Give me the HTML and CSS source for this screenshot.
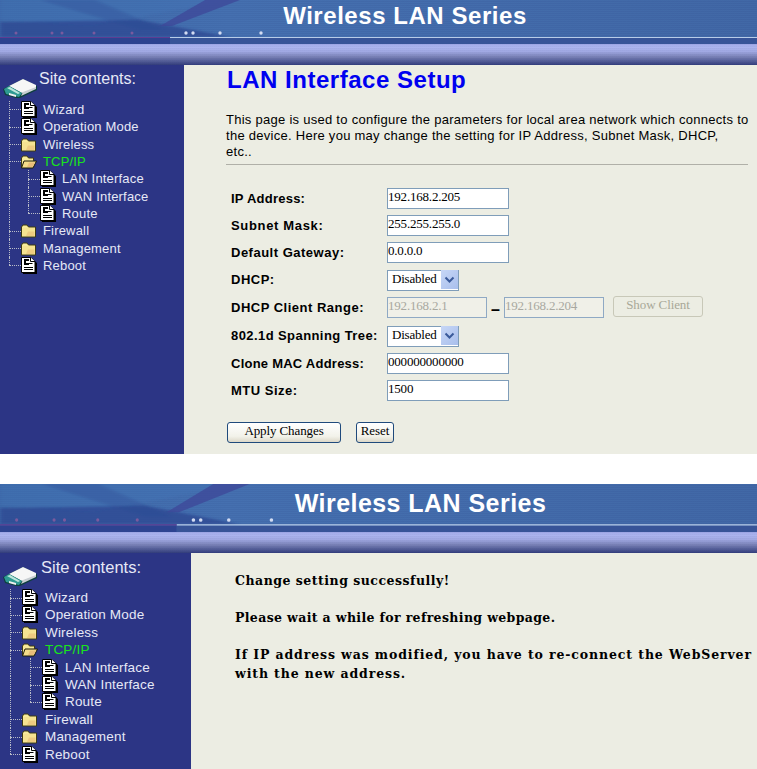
FILE: index.html
```html
<!DOCTYPE html>
<html lang="en">
<head>
<meta charset="utf-8">
<title>Wireless LAN Series</title>
<link rel="stylesheet" href="styles.css">
</head>
<body>
<svg class="defs" width="0" height="0" aria-hidden="true">
  <defs>
    <filter id="soft" x="-5%" y="-20%" width="110%" height="140%"><feGaussianBlur stdDeviation="2 1"/></filter>
    <symbol id="doc" viewBox="0 0 16 17">
      <path d="M2 2H11L16 6V17H2Z" fill="#000"/>
      <path d="M.5 .5H10L14 4.500V15.500H.5Z" fill="#fff" stroke="#000"/>
      <path d="M9.500 .5V4.500H14" fill="#fff" stroke="#000"/>
      <path d="M3 2H8V4H5V6H8V8H3Z" fill="#000"/>
      <path d="M8 6.500H11.500M3 10.500H12M3 12.500H12" stroke="#000" fill="none"/>
    </symbol>
    <symbol id="folder" viewBox="1 0 16 14">
      <path d="M1.500 3.500 3 1.500H7L8.500 3.500H15.500V13.500H1.500Z" fill="#f7ea9a" stroke="#3f3a10"/>
      <path d="M2.500 4.500H14.500V12.500H2.500Z" fill="#f5e291"/>
      <path d="M8 8H14.500V12.500H6Z" fill="#eecb80"/>
    </symbol>
    <symbol id="folder-open" viewBox="1 0 16 14">
      <path d="M1.500 12.500V3.500L3 1.500H7L8.500 3.500H13.500V6" fill="#f7ea9a" stroke="#3f3a10"/>
      <path d="M1.500 13.500 4 6.500H16.500L13 13.500Z" fill="#f4dd8b" stroke="#1b1a08"/>
      <path d="M9 8H15L12.500 12.500H7Z" fill="#e9bd7a"/>
    </symbol>
    <symbol id="disk" viewBox="0 0 34 20">
      <path d="M0 11 20 1 34 8V12L17 20H13L2 17Z" fill="#0e3f3e"/>
      <path d="M6 8 20 1 33 7 33 10 19 15Z" fill="#f6f6f6"/>
      <path d="M20 14 33 9V11L18 18Z" fill="#c9ced2"/>
      <path d="M1 11 6 8 19 15 16 19 3 16Z" fill="#2e9a92"/>
      <path d="M4 10 7 9 17 15 15 16Z" fill="#bde6dc"/>
      <path d="M6 15 13 17V19L6 17Z" fill="#f0f0f0"/>
    </symbol>
    <symbol id="art" viewBox="0 0 757 44" preserveAspectRatio="none">
      <g filter="url(#soft)">
        <path d="M0 0H230L90 26 0 20Z" fill="#4676b6" opacity=".35"/>
        <path d="M40 0H95L165 30H140Z" fill="#2f5098" opacity=".4"/>
        <path d="M0 22 140 20 230 37H0Z" fill="#2b4791" opacity=".75"/>
      </g>
      <path d="M205 0H240L172 26 160 26Z" fill="#3d4798" opacity=".75"/>
      <path d="M0 38H170V44H0Z" fill="#2d4391"/>
      <path d="M0 37.500H170" stroke="#5e3d92" fill="none"/>
      <path d="M170 38H757V44H170Z" fill="#375498"/>
      <path d="M170 37.500H757" stroke="#b8cce8" fill="none"/>
      <g fill="#7a5a9e">
        <circle cx="16" cy="33" r="1.500"/><circle cx="52" cy="33" r="1.500"/><circle cx="62" cy="33" r="1.500"/><circle cx="94" cy="33" r="1.500"/><circle cx="132" cy="33" r="1.500"/>
      </g>
      <g fill="#d3dcf2">
        <circle cx="186" cy="33" r="1.700"/><circle cx="193" cy="33" r="1.700"/><circle cx="220" cy="33" r="1.700"/><circle cx="261" cy="33" r="1.700"/>
      </g>
    </symbol>
  </defs>
</svg>

<section class="panel panel-setup">
  <header class="banner">
    <svg class="banner-art" aria-hidden="true"><use href="#art"/></svg>
    <h2 class="banner-title">Wireless LAN Series</h2>
  </header>
  <div class="band"></div>
  <div class="main">
    <nav class="sidebar">
      <div class="site"><svg class="disk"><use href="#disk"/></svg><span class="site-text">Site contents:</span></div>
      <div class="row"><i class="conn"></i><svg class="ico"><use href="#doc"/></svg><span class="lbl">Wizard</span></div>
      <div class="row"><i class="conn"></i><svg class="ico"><use href="#doc"/></svg><span class="lbl">Operation Mode</span></div>
      <div class="row"><i class="conn"></i><svg class="ico"><use href="#folder"/></svg><span class="lbl">Wireless</span></div>
      <div class="row"><i class="conn"></i><svg class="ico"><use href="#folder-open"/></svg><span class="lbl lbl-on">TCP/IP</span></div>
      <div class="row"><i class="pass"></i><i class="conn"></i><svg class="ico"><use href="#doc"/></svg><span class="lbl">LAN Interface</span></div>
      <div class="row"><i class="pass"></i><i class="conn"></i><svg class="ico"><use href="#doc"/></svg><span class="lbl">WAN Interface</span></div>
      <div class="row"><i class="pass"></i><i class="conn conn-end"></i><svg class="ico"><use href="#doc"/></svg><span class="lbl">Route</span></div>
      <div class="row"><i class="conn"></i><svg class="ico"><use href="#folder"/></svg><span class="lbl">Firewall</span></div>
      <div class="row"><i class="conn"></i><svg class="ico"><use href="#folder"/></svg><span class="lbl">Management</span></div>
      <div class="row"><i class="conn conn-end"></i><svg class="ico"><use href="#doc"/></svg><span class="lbl">Reboot</span></div>
    </nav>
    <main class="content">
      <h1 class="page-title">LAN Interface Setup</h1>
      <p class="intro">This page is used to configure the parameters for local area network which connects to the device. Here you may change the setting for IP Address, Subnet Mask, DHCP,<br>etc..</p>
      <hr class="rule">
      <form class="form">
        <div class="f-row"><label class="f-lbl f-lbl-narrow">IP Address:</label><input class="txt" value="192.168.2.205"></div>
        <div class="f-row"><label class="f-lbl f-lbl-open">Subnet Mask:</label><input class="txt" value="255.255.255.0"></div>
        <div class="f-row"><label class="f-lbl">Default Gateway:</label><input class="txt" value="0.0.0.0"></div>
        <div class="f-row f-tight"><label class="f-lbl">DHCP:</label><span class="sel"><select class="sel-box"><option>Disabled</option></select><svg class="sel-arrow" viewBox="0 0 17 19"><path d="M4.500 7.500 8.500 11.500 12.500 7.500" fill="none" stroke="#3a5a9a" stroke-width="2"/></svg></span></div>
        <div class="f-row f-loose"><label class="f-lbl">DHCP Client Range:</label><input class="txt txt-range" disabled value="192.168.2.1"><b class="dash">–</b><input class="txt txt-range" disabled value="192.168.2.204"><button class="btn btn-show" type="button" disabled>Show Client</button></div>
        <div class="f-row"><label class="f-lbl f-lbl-wide">802.1d Spanning Tree:</label><span class="sel"><select class="sel-box"><option>Disabled</option></select><svg class="sel-arrow" viewBox="0 0 17 19"><path d="M4.500 7.500 8.500 11.500 12.500 7.500" fill="none" stroke="#3a5a9a" stroke-width="2"/></svg></span></div>
        <div class="f-row f-gap"><label class="f-lbl f-lbl-narrow">Clone MAC Address:</label><input class="txt" value="000000000000"></div>
        <div class="f-row"><label class="f-lbl">MTU Size:</label><input class="txt" value="1500"></div>
        <div class="actions"><button class="btn btn-apply" type="button">Apply Changes</button><button class="btn btn-reset" type="button">Reset</button></div>
      </form>
    </main>
  </div>
</section>

<section class="panel panel-done">
  <header class="banner">
    <svg class="banner-art" aria-hidden="true"><use href="#art"/></svg>
    <h2 class="banner-title">Wireless LAN Series</h2>
  </header>
  <div class="band"></div>
  <div class="main">
    <nav class="sidebar">
      <div class="site"><svg class="disk"><use href="#disk"/></svg><span class="site-text">Site contents:</span></div>
      <div class="row"><i class="conn"></i><svg class="ico"><use href="#doc"/></svg><span class="lbl">Wizard</span></div>
      <div class="row"><i class="conn"></i><svg class="ico"><use href="#doc"/></svg><span class="lbl">Operation Mode</span></div>
      <div class="row"><i class="conn"></i><svg class="ico"><use href="#folder"/></svg><span class="lbl">Wireless</span></div>
      <div class="row"><i class="conn"></i><svg class="ico"><use href="#folder-open"/></svg><span class="lbl lbl-on">TCP/IP</span></div>
      <div class="row"><i class="pass"></i><i class="conn"></i><svg class="ico"><use href="#doc"/></svg><span class="lbl">LAN Interface</span></div>
      <div class="row"><i class="pass"></i><i class="conn"></i><svg class="ico"><use href="#doc"/></svg><span class="lbl">WAN Interface</span></div>
      <div class="row"><i class="pass"></i><i class="conn conn-end"></i><svg class="ico"><use href="#doc"/></svg><span class="lbl">Route</span></div>
      <div class="row"><i class="conn"></i><svg class="ico"><use href="#folder"/></svg><span class="lbl">Firewall</span></div>
      <div class="row"><i class="conn"></i><svg class="ico"><use href="#folder"/></svg><span class="lbl">Management</span></div>
      <div class="row"><i class="conn conn-end"></i><svg class="ico"><use href="#doc"/></svg><span class="lbl">Reboot</span></div>
    </nav>
    <main class="content content-msg">
      <p class="msg">Change setting successfully!</p>
      <p class="msg msg-tight">Please wait a while for refreshing webpage.</p>
      <p class="msg msg-wide">If IP address was modified, you have to re-connect the WebServer with the new address.</p>
    </main>
  </div>
</section>
</body>
</html>
```
FILE: styles.css
```css
html, body { margin: 0; padding: 0; background: #fff; overflow: hidden; }
body { font-family: "Liberation Sans", Arial, sans-serif; color: #000; }
.defs { position: absolute; }

.panel { overflow: hidden; display: flex; flex-direction: column; }
.panel-setup {
  height: 454px; margin-bottom: 30px;
  --banner: 44px; --band: 21px; --side: 184px; --art-w: 100%; --disk-gap: 2px;
  --title-size: 24px; --title-pad: 53px; --title-ls: .55px; --title-lh: 32px;
  --row: 17.33px; --lbl: 13px; --lbl-ls: .18px; --site: 16px;
  --conn-x: 9px; --conn: 12px; --ico: 16px; --gap: 6px; --pass: 19px;
}
.panel-done {
  height: 285px;
  --banner: 48px; --band: 21px; --side: 191px; --art-w: 104%; --disk-gap: 4px;
  --title-size: 25px; --title-pad: 84px; --title-ls: .45px; --title-lh: 38px;
  --row: 17.42px; --lbl: 13.5px; --lbl-ls: .18px; --site: 16.500px;
  --conn-x: 10px; --conn: 12px; --ico: 16px; --gap: 7px; --pass: 20px;
}

.banner {
  position: relative; flex: none; height: var(--banner); overflow: hidden;
  background:
    repeating-linear-gradient(0deg, rgba(30,40,110,.07) 0 1px, transparent 1px 2px),
    linear-gradient(90deg, #3d6aaa 0%, #4570b0 30%, #4168a6 100%);
}
.banner-art { position: absolute; left: 0; top: 0; width: var(--art-w); height: 100%; }
.banner-title {
  position: relative; margin: 0; padding-left: var(--title-pad);
  text-align: center; color: #fff; font-size: var(--title-size); font-weight: 700;
  letter-spacing: var(--title-ls); line-height: var(--title-lh);
}
.band {
  flex: none; height: var(--band);
  background:
    repeating-linear-gradient(0deg, rgba(30,40,90,.04) 0 1px, transparent 1px 2px),
    linear-gradient(180deg, #a0a9e8 0%, #acb5f0 14%, #a2aae4 35%, #7b83b8 60%, #525c96 82%, #323d7c 100%);
}

.main { flex: 1; display: flex; min-height: 0; background: #ecede3; }
.sidebar { flex: none; width: var(--side); background: #2c3585; color: #e6e8f6; overflow: hidden; }
.site { height: 35.800px; display: flex; align-items: flex-start; position: relative; }
.disk { width: 34px; height: 20px; margin: 13px var(--disk-gap) 0 3px; flex: none; }
.site-text { font-size: var(--site); line-height: 28px; white-space: nowrap; }
.row { height: var(--row); display: flex; align-items: center; padding-left: var(--conn-x); box-sizing: border-box; }
.conn, .pass { position: relative; flex: none; align-self: stretch; display: block; width: var(--conn); }
.pass { width: var(--pass); }
.conn::before, .pass::before { content: ""; position: absolute; left: 0; top: 0; bottom: 0; border-left: 1px dotted #b9bcc8; }
.conn::after { content: ""; position: absolute; left: 0; right: 0; top: 50%; border-top: 1px dotted #b9bcc8; }
.conn-end::before { bottom: 50%; }
.ico { flex: none; width: var(--ico); height: 17px; }
.lbl { margin-left: var(--gap); font-size: var(--lbl); letter-spacing: var(--lbl-ls); white-space: nowrap; }
.lbl-on { color: #19e619; }

.content { flex: 1; padding: 0 9px 0 42px; min-width: 0; }
.page-title { margin: 0 0 0 1px; font-size: 24px; line-height: 30px; color: #0000f0; letter-spacing: .52px; }
.intro { margin: 17px 0 0; width: 526px; font-size: 13px; line-height: 16px; letter-spacing: .27px; }
.rule { margin: 4px 0 0; width: 522px; border: 0; border-top: 1px solid #b0b0a8; height: 0; }

.form { margin: 20px 0 0 5px; }
.f-row { height: 27px; display: flex; align-items: center; }
.f-tight { height: 26px; }
.f-loose { height: 29px; margin-top: 1px; }
.f-gap { margin-top: 1px; }
.f-lbl { width: 156px; flex: none; font-size: 13px; font-weight: 700; letter-spacing: .5px; white-space: nowrap; }
.f-lbl-wide { letter-spacing: .42px; }
.f-lbl-narrow { letter-spacing: .24px; }
.f-lbl-open { letter-spacing: .66px; }
.txt {
  box-sizing: border-box; width: 122px; height: 21px; margin: 0; padding: 0 0 4px 0;
  border: 1px solid #7f9db9; border-radius: 0; background: #fff; color: #000;
  font-family: "Liberation Serif", serif; font-size: 13px; letter-spacing: -.2px; outline: 0;
}
.txt-range { width: 100px; background: #f0f0e8; color: #a8a8a0; opacity: 1; border-color: #8fa9c4; }
.dash { width: 17px; padding-top: 5px; text-align: center; font-size: 16px; line-height: 16px; }
.sel { position: relative; display: block; width: 72px; height: 21px; }
.sel-box {
  appearance: none; box-sizing: border-box; width: 100%; height: 100%; margin: 0; padding: 0 0 4px 4px;
  border: 1px solid #7f9db9; border-radius: 0; background: #fff; color: #000;
  font-family: "Liberation Serif", serif; font-size: 13px; letter-spacing: -.2px;
}
.sel-arrow { position: absolute; right: 1px; top: 1px; width: 17px; height: 19px; background: linear-gradient(135deg, #c6d6f6, #a9bfec); }
.btn {
  box-sizing: border-box; height: 21px; margin: 0; padding: 0 0 5px;
  font-family: "Liberation Serif", serif; font-size: 13px; letter-spacing: -.1px; color: #000;
  background: linear-gradient(180deg, #fff 0%, #f2f2ea 70%, #dcd8c8 100%);
  border: 1px solid #1f4a7c; border-radius: 3px;
}
.btn-show {
  width: 90px; margin: -2px 0 0 9px; color: #a8a898; border-color: #c8c8b8;
  background: #ecede3;
}
.actions { margin-top: 18px; margin-left: -4px; display: flex; gap: 15px; }
.btn-apply { width: 114px; }
.btn-reset { width: 38px; }

.content-msg { padding: 19px 0 0 44px; overflow: hidden; }
.msg { margin: 0 0 18.500px; width: 522px; font-family: "DejaVu Serif", serif; font-size: 12.500px; font-weight: 700; line-height: 18.500px; letter-spacing: .5px; }
.msg-tight { letter-spacing: .36px; }
.msg-wide { letter-spacing: .88px; }
```
